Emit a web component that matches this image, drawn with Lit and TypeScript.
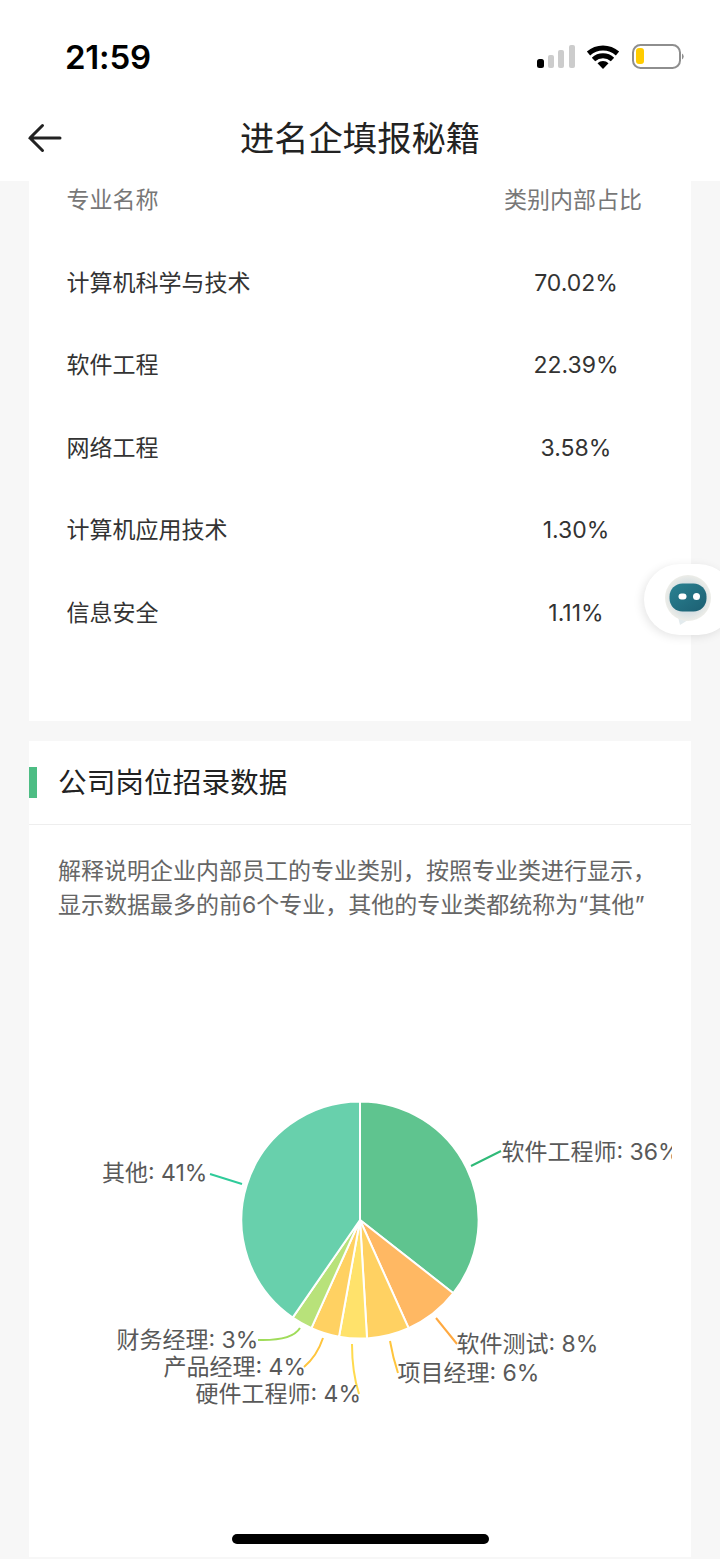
import { LitElement, html, css, svg } from "lit";
import { customElement } from "lit/decorators.js";

const CX = 360, CY = 1220 - 941, R = 118.6;
const pt = (a: number, r = R) => {
  const t = (a * Math.PI) / 180;
  return `${(CX + r * Math.sin(t)).toFixed(2)} ${(CY - r * Math.cos(t)).toFixed(2)}`;
};
const SLICES = [
  { from: 0, to: 128.1, fill: "#5FC48F" },
  { from: 128.1, to: 155.8, fill: "#FFB863" },
  { from: 155.8, to: 176.6, fill: "#FFD162" },
  { from: 176.6, to: 190.2, fill: "#FFE26B" },
  { from: 190.2, to: 204.2, fill: "#FFD162" },
  { from: 204.2, to: 214.6, fill: "#B8E27A" },
  { from: 214.6, to: 360, fill: "#68D0AC" },
];
const Y = (v: number) => v - 941;
const LABELS = [
  { t: "软件工程师: 36%", x: 501.5, y: 1160, d: `M471 ${Y(1166)}L501 ${Y(1151)}`, c: "#2FBA78" },
  { t: "软件测试: 8%", x: 456.5, y: 1352, d: `M436 ${Y(1318)}L457 ${Y(1344)}`, c: "#FFA940" },
  { t: "项目经理: 6%", x: 397.5, y: 1381, d: `M390 ${Y(1341)}Q393 ${Y(1358)} 398 ${Y(1373)}`, c: "#FFC53D" },
  { t: "硬件工程师: 4%", x: 195.5, y: 1402, d: `M352 ${Y(1344)}Q352 ${Y(1372)} 359 ${Y(1394)}`, c: "#FFDA4D" },
  { t: "产品经理: 4%", x: 163.5, y: 1375, d: `M323 ${Y(1338)}Q317 ${Y(1356)} 304 ${Y(1367)}`, c: "#FFC53D" },
  { t: "财务经理: 3%", x: 116.5, y: 1348, d: `M300 ${Y(1328)}Q292 ${Y(1341)} 258 ${Y(1340)}`, c: "#A0DC5A" },
  { t: "其他: 41%", x: 102, y: 1181, d: `M242 ${Y(1184)}L210 ${Y(1174)}`, c: "#2FCB9A" },
];
const ROWS = [
  ["计算机科学与技术", "70.02%"],
  ["软件工程", "22.39%"],
  ["网络工程", "3.58%"],
  ["计算机应用技术", "1.30%"],
  ["信息安全", "1.11%"],
];

@customElement("app-root")
export class AppRoot extends LitElement {
  static styles = css`
    :host {
      display: block;
      width: 720px;
      height: 1559px;
      overflow: hidden;
      position: relative;
      background: #f7f7f7;
      font-family: "Inter", "Noto Sans CJK SC", sans-serif;
    }
    .top { background: #fff; height: 181px; display: flex; flex-direction: column; }
    .status { height: 100px; display: flex; justify-content: space-between; padding: 44px 36px 0 65px; box-sizing: border-box; }
    .time { font-size: 33px; font-weight: 600; line-height: 27px; color: #000; letter-spacing: -0.2px; }
    .status svg { display: block; }
    .nav { height: 81px; position: relative; display: flex; align-items: center; justify-content: center; padding-bottom: 4px; box-sizing: border-box; }
    .nav svg { position: absolute; left: 27px; top: 23px; }
    .nav h1 { margin: 0; font-size: 34.3px; font-weight: 400; color: #222; line-height: 44px; }
    .card { background: #fff; margin: 0 29px; }
    .c1 { height: 540px; padding: 0 50px 0 37.5px; box-sizing: border-box; }
    .thead, .row { display: grid; grid-template-columns: 1fr 132px; align-items: center; }
    .thead { height: 60.5px; padding-bottom: 26px; box-sizing: border-box; font-size: 23px; color: #777; }
    .thead div:last-child { white-space: nowrap; text-align: center; margin-left: -5px; }
    .row { height: 82.5px; font-size: 23px; color: #333; }
    .row div:first-child { padding-bottom: 4px; }
    .row div:last-child { text-align: center; margin-right: -2px; }
    .c2 { margin-top: 20px; height: 816px; }
    .head { height: 84px; border-bottom: 1px solid #eeeeee; box-sizing: border-box; position: relative; display: flex; align-items: center; padding-left: 29px; }
    .head::before { content: ""; position: absolute; left: 0; top: 26px; width: 8px; height: 31px; background: #4dbd84; }
    .head h2 { margin: 0; font-size: 28.7px; font-weight: 400; color: #222; line-height: 40px; }
    .desc { margin: 29px 0 0; padding: 0 29px; font-size: 23px; line-height: 34px; color: #666; white-space: nowrap; }
    .chart { position: absolute; left: 0; top: 941px; width: 672px; height: 618px; display: block; overflow: hidden; }
    .chart text { font-size: 23px; fill: #595959; font-family: "Inter", "Noto Sans CJK SC", sans-serif; }
    .bot {
      position: absolute; left: 644px; top: 564px; width: 90px; height: 71px;
      border-radius: 36px; background: #fff; box-shadow: -2px 2px 10px rgba(0,0,0,.1);
      display: flex; align-items: center; padding-left: 20px; box-sizing: border-box;
    }
    .home { position: absolute; left: 232px; top: 1534px; width: 257px; height: 10px; border-radius: 5px; background: #000; }
  `;

  render() {
    return html`
      <div class="top">
        <div class="status">
          <div class="time">21:59</div>
          <svg width="148" height="26" viewBox="0 0 148 26">
            <rect x="1" y="15" width="7" height="9" rx="2.5" fill="#000"/>
            <rect x="12" y="11" width="6" height="13" rx="2" fill="#ccc"/>
            <rect x="22" y="6" width="6" height="18" rx="2" fill="#ccc"/>
            <rect x="33" y="1" width="6" height="23" rx="2" fill="#ccc"/>
            <path d="M52.500 9.500a22 22 0 0 1 29 0M57.500 15.500a14 14 0 0 1 19 0" fill="none" stroke="#000" stroke-width="5"/>
            <path d="M61.500 19.200a8 8 0 0 1 11 0L67 25z" fill="#000"/>
            <rect x="97" y="1" width="47" height="23" rx="7.5" fill="none" stroke="#8e8e8e" stroke-width="2"/>
            <rect x="100" y="4" width="8" height="16" rx="3" fill="#ffcc00"/>
            <path d="M146 9.500a3.500 3.500 0 0 1 0 6z" fill="#8e8e8e"/>
          </svg>
        </div>
        <div class="nav">
          <svg width="36" height="30" viewBox="0 0 36 30" fill="none" stroke="#222" stroke-width="3" stroke-linecap="round">
            <path d="M33 15H3M15.500 2.500L3 15l12.500 12.500"/>
          </svg>
          <h1>进名企填报秘籍</h1>
        </div>
      </div>
      <div class="card c1">
        <div class="thead"><div>专业名称</div><div>类别内部占比</div></div>
        ${ROWS.map((r) => html`<div class="row"><div>${r[0]}</div><div>${r[1]}</div></div>`)}
      </div>
      <div class="card c2">
        <div class="head"><h2>公司岗位招录数据</h2></div>
        <p class="desc">解释说明企业内部员工的专业类别，按照专业类进行显示，<br>显示数据最多的前6个专业，其他的专业类都统称为“其他”</p>
      </div>
      <svg class="chart" viewBox="0 0 672 618">
        ${SLICES.map(
          (s) => svg`<path d="M${CX} ${CY}L${pt(s.from)}A${R} ${R} 0 ${s.to - s.from > 180 ? 1 : 0} 1 ${pt(s.to)}Z" fill="${s.fill}" stroke="#fff" stroke-width="2" stroke-linejoin="round"/>`
        )}
        ${LABELS.map(
          (l) => svg`<path d="${l.d}" fill="none" stroke="${l.c}" stroke-width="2"/><text x="${l.x}" y="${Y(l.y)}">${l.t}</text>`
        )}
      </svg>
      <div class="bot">
        <svg width="50" height="52" viewBox="0 0 50 52">
          <defs>
            <radialGradient id="halo" cx=".5" cy=".5" r=".55">
              <stop offset="0.6" stop-color="#d8e0e3"/>
              <stop offset="1" stop-color="#f3f1ea"/>
            </radialGradient>
            <linearGradient id="body" x1="0" y1="0" x2="1" y2="1">
              <stop offset="0" stop-color="#2a8292"/>
              <stop offset="1" stop-color="#1c5f72"/>
            </linearGradient>
          </defs>
          <path d="M14 43l2 8 8-5z" fill="#e3ebee"/>
          <circle cx="24" cy="24" r="23" fill="url(#halo)"/>
          <rect x="5.500" y="9.500" width="37" height="28" rx="13" fill="url(#body)"/>
          <rect x="14.500" y="19.500" width="8" height="6" rx="3" fill="#fff"/>
          <rect x="29" y="19" width="7" height="7" rx="3.500" fill="#fff"/>
        </svg>
      </div>
      <div class="home"></div>
    `;
  }
}
